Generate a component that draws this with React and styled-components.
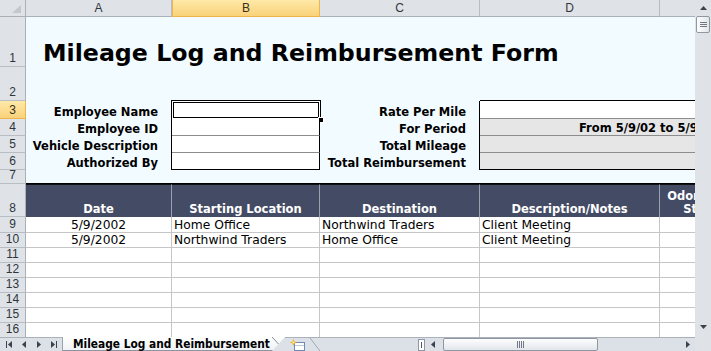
import React from 'react';
import styled, { createGlobalStyle, css } from 'styled-components';

const GlobalStyle = createGlobalStyle`
  * { box-sizing: border-box; }
  html, body { margin: 0; padding: 0; overflow: hidden; background: #fff; }
`;

const COLUMNS = ['A', 'B', 'C', 'D', 'E'];
const COL_WIDTHS = [26, 146, 148, 160, 180, 80];
const ROW_HEIGHTS = [50, 34, 18, 17, 17, 17, 14, 33, 16, 15, 15, 15, 15, 15, 15, 15];

const formRows = [
  { label: 'Employee Name', right: 'Rate Per Mile', fill: '#fff' },
  { label: 'Employee ID', right: 'For Period', fill: '#e6e6e6', value: 'From 5/9/02 to 5/9/02' },
  { label: 'Vehicle Description', right: 'Total Mileage', fill: '#e6e6e6' },
  { label: 'Authorized By', right: 'Total Reimbursement', fill: '#e6e6e6' },
];

const headings = ['Date', 'Starting Location', 'Destination', 'Description/Notes', 'Odometer Start'];

const trips = [
  { date: '5/9/2002', from: 'Home Office', to: 'Northwind Traders', notes: 'Client Meeting' },
  { date: '5/9/2002', from: 'Northwind Traders', to: 'Home Office', notes: 'Client Meeting' },
];

const Window = styled.div`
  width: 711px;
  height: 351px;
  display: flex;
  flex-direction: column;
  overflow: hidden;
  font-family: "DejaVu Sans", Verdana, sans-serif;
`;

const Main = styled.div`
  display: flex;
  height: 337px;
`;

const Viewport = styled.div`
  flex: 1;
  overflow: hidden;
`;

const Grid = styled.div`
  display: grid;
  grid-template-columns: ${COL_WIDTHS.map(w => `${w}px`).join(' ')};
  grid-template-rows: 17px ${ROW_HEIGHTS.map(h => `${h}px`).join(' ')};
  width: max-content;
`;

const headerBase = css`
  background: #dfe3e8;
  color: #30353b;
  font-family: "Liberation Sans", Arial, sans-serif;
  font-size: 12px;
  display: flex;
  justify-content: center;
`;

const activeHeader = css`
  background: linear-gradient(#fee9a8, #f9d27a);
  color: #3a3020;
`;

const Corner = styled.div`
  ${headerBase};
  position: relative;
  border-right: 1px solid #a9b0b8;
  border-bottom: 1px solid #a9b0b8;
`;

const CornerMark = styled.svg`
  position: absolute;
  right: 4px;
  bottom: 3px;
`;

const ColHead = styled.div`
  ${headerBase};
  align-items: center;
  border-right: 1px solid #b8bdc3;
  border-bottom: 1px solid #a9b0b8;
  ${p => p.$active && css`
    ${activeHeader};
    border-left: 1px solid #f0b44e;
    border-right-color: #f0b44e;
    border-bottom-color: #f0b44e;
  `}
`;

const RowHead = styled.div`
  ${headerBase};
  align-items: flex-end;
  line-height: 13px;
  padding-bottom: 1px;
  border-right: 1px solid #a9b0b8;
  border-bottom: 1px solid #b8bdc3;
  ${p => p.$active && css`
    ${activeHeader};
    border-bottom-color: #f0b44e;
    border-right-color: #f0b44e;
  `}
`;

const FormCell = styled.div`
  grid-column: span ${p => p.$span || 1};
  background: #f2fbff;
  display: flex;
  align-items: flex-end;
  border-right: ${p => (p.$edge ? '1px solid #000' : 'none')};
  border-bottom: ${p => (p.$bottom ? `1px solid ${p.$bottom}` : 'none')};
`;

const Title = styled(FormCell)`
  padding-left: 17px;
  font-size: 23.7px;
  font-weight: bold;
  color: #000;
  white-space: nowrap;
`;

const Label = styled(FormCell)`
  justify-content: flex-end;
  padding: 0 13px 0 0;
  font-size: 11.5px;
  font-weight: bold;
  line-height: 13px;
  white-space: nowrap;
  color: #000;
`;

const Box = styled(FormCell)`
  position: relative;
  background: ${p => p.$fill};
  font-size: 11.5px;
  font-weight: bold;
  line-height: 13px;
  white-space: nowrap;
  padding-left: ${p => p.$indent || 0}px;
`;

const Selection = styled.div`
  position: absolute;
  top: -1px;
  left: -1px;
  right: -2px;
  bottom: -2px;
  border: 1px solid #000;
  box-shadow: inset 0 0 0 1px #fff, inset 0 0 0 2px #000;
`;

const FillHandle = styled.span`
  position: absolute;
  right: -4px;
  bottom: -4px;
  width: 6px;
  height: 6px;
  background: #000;
  border: 1px solid #fff;
`;

const HeadCell = styled.div`
  background: #444c65;
  color: #fff;
  font-size: 11.5px;
  font-weight: bold;
  line-height: 13px;
  text-align: center;
  display: flex;
  align-items: flex-end;
  justify-content: center;
  padding-bottom: 1px;
  border-top: 1px solid #111;
  border-right: 1px solid #9aa0ae;
`;

const DataCell = styled.div`
  background: #fff;
  color: #000;
  font-size: 12.3px;
  line-height: 12px;
  white-space: nowrap;
  overflow: hidden;
  display: flex;
  align-items: flex-end;
  justify-content: ${p => (p.$center ? 'center' : 'flex-start')};
  padding: 0 2px 1px;
  border-right: 1px solid #c6c6c6;
  border-bottom: 1px solid #c6c6c6;
`;

const VScroll = styled.div`
  width: 16px;
  display: flex;
  flex-direction: column;
  align-items: center;
  background: #dfe3e8;
`;

const ScrollArrow = styled.div`
  width: 16px;
  height: ${p => p.$h || 16}px;
  display: flex;
  align-items: center;
  justify-content: center;
  flex-shrink: 0;
`;

const VThumb = styled.div`
  width: 14px;
  height: 17px;
  border: 1px solid #8f98a2;
  border-radius: 2px;
  background: linear-gradient(to right, #fdfdfe, #e2e6eb);
  display: flex;
  flex-direction: column;
  justify-content: center;
  align-items: center;
  gap: 1px;
`;

const Grip = styled.span`
  width: ${p => (p.$vertical ? 1 : 7)}px;
  height: ${p => (p.$vertical ? 7 : 1)}px;
  background: #6f7883;
`;

const Spacer = styled.div`
  flex: 1;
`;

const TabBar = styled.div`
  height: 14px;
  display: flex;
  background: #dce1e8;
`;

const BarPart = styled.div`
  height: 100%;
  flex: none;
  border-top: 1px solid #aab1ba;
  display: flex;
  align-items: center;
`;

const NavGroup = styled(BarPart)`
  width: 63px;
  padding-left: 1px;
  border-right: 1px solid #9aa2ac;
`;

const NavButton = styled.span`
  width: 15px;
  display: flex;
  justify-content: center;
`;

const SheetTab = styled.div`
  position: relative;
  flex: none;
  width: 222px;
  height: 100%;
  padding: 0 0 0 10px;
  display: flex;
  align-items: center;
  background: linear-gradient(#ffffff, #eef1f5);
  clip-path: polygon(0 0, 100% 0, calc(100% - 13px) 100%, 0 100%);
  box-shadow: inset 0 -1px #8b949f;
  font-family: "DejaVu Sans Condensed", "DejaVu Sans", sans-serif;
  font-size: 11.8px;
  font-weight: bold;
  line-height: 13px;
  white-space: nowrap;
  overflow: hidden;
  color: #000;

  &::after {
    content: '';
    position: absolute;
    top: 0;
    right: 0;
    width: 13px;
    height: 100%;
    background: linear-gradient(to bottom left, transparent calc(50% - 0.7px), #7d8792 50%, transparent calc(50% + 0.7px));
  }
`;

const NewTab = styled(BarPart)`
  position: relative;
  width: 35px;
  padding-left: 5px;

  &::after {
    content: '';
    position: absolute;
    top: 0;
    right: 0;
    width: 10px;
    height: 100%;
    background: linear-gradient(to bottom left, transparent calc(50% - 0.7px), #9aa2ac 50%, transparent calc(50% + 0.7px));
  }
`;

const Filler = styled(BarPart)`
  width: 97px;
`;

const Splitter = styled(BarPart)`
  width: 9px;
  justify-content: center;

  span {
    width: 7px;
    height: 12px;
    border: 1px solid #8f98a2;
    background: #fff;
    display: flex;
    justify-content: center;
  }
  span::after {
    content: '';
    width: 1px;
    margin-top: 2px;
    height: 6px;
    background: #555;
  }
`;

const HArrow = styled(BarPart)`
  width: 14px;
  justify-content: center;
`;

const Track = styled(BarPart)`
  flex: 1;
`;

const HThumb = styled.div`
  width: 155px;
  height: 13px;
  margin-left: 3px;
  border: 1px solid #8f98a2;
  border-radius: 2px;
  background: linear-gradient(#fdfdfe, #e2e6eb);
  display: flex;
  justify-content: center;
  align-items: center;
  gap: 1px;
`;

const CornerBox = styled.div`
  width: 16px;
  flex: none;
  height: 100%;
  background: #dfe3e8;
`;

const Tri = ({ dir, bar }) => {
  const shapes = {
    up: '0,4 3.5,0 7,4',
    down: '0,0 7,0 3.5,4',
    left: '4,0 4,7 0,3.5',
    right: '0,0 0,7 4,3.5',
  };
  const horizontal = dir === 'left' || dir === 'right';
  const w = horizontal ? 4 + (bar ? 2 : 0) : 7;
  const h = horizontal ? 7 : 4;
  return (
    <svg width={w} height={h} viewBox={`${bar && dir === 'left' ? -2 : 0} 0 ${w} ${h}`}>
      <polygon points={shapes[dir]} fill="#3a434e" />
      {bar && <rect x={dir === 'left' ? -2 : 5} y="0" width="1" height="7" fill="#3a434e" />}
    </svg>
  );
};

const NewSheetIcon = () => (
  <svg width="16" height="12" viewBox="0 0 16 12">
    <rect x="4.5" y="3.5" width="10" height="8" fill="#fff" stroke="#6d8bb0" />
    <line x1="5" y1="6.5" x2="14" y2="6.5" stroke="#b9c8da" />
    <path d="M3.5 0 L4.4 2.6 L7 3.5 L4.4 4.4 L3.5 7 L2.6 4.4 L0 3.5 L2.6 2.6 Z" fill="#f3a90f" />
    <circle cx="3.5" cy="3.5" r="1.1" fill="#fff3b0" />
  </svg>
);

const App = () => (
  <Window>
    <GlobalStyle />
    <Main>
      <Viewport>
        <Grid>
          <Corner>
            <CornerMark width="9" height="8" viewBox="0 0 9 8">
              <polygon points="9,0 9,8 0,8" fill="#c3c8ce" />
            </CornerMark>
          </Corner>
          {COLUMNS.map(c => (
            <ColHead key={c} $active={c === 'B'}>{c}</ColHead>
          ))}

          <RowHead>1</RowHead>
          <Title $span={5}>Mileage Log and Reimbursement Form</Title>

          <RowHead>2</RowHead>
          <FormCell />
          <FormCell $bottom="#000" />
          <FormCell />
          <FormCell $span={2} $bottom="#000" />

          {formRows.map((row, i) => {
            const bottom = i === formRows.length - 1 ? '#000' : '#8c8c8c';
            return (
              <React.Fragment key={row.label}>
                <RowHead $active={i === 0}>{i + 3}</RowHead>
                <Label $edge>{row.label}</Label>
                <Box $fill="#fff" $edge $bottom={bottom}>
                  {i === 0 && (
                    <Selection>
                      <FillHandle />
                    </Selection>
                  )}
                </Box>
                <Label $edge>{row.right}</Label>
                <Box $span={2} $fill={row.fill} $edge $bottom={bottom} $indent={row.value ? 99 : 0}>
                  {row.value}
                </Box>
              </React.Fragment>
            );
          })}

          <RowHead>7</RowHead>
          <FormCell $span={5} $bottom="#000" />

          <RowHead>8</RowHead>
          {headings.map(h => (
            <HeadCell key={h}>{h}</HeadCell>
          ))}

          {Array.from({ length: 8 }, (_, i) => {
            const trip = trips[i] || {};
            return (
              <React.Fragment key={i}>
                <RowHead>{i + 9}</RowHead>
                <DataCell $center>{trip.date}</DataCell>
                <DataCell>{trip.from}</DataCell>
                <DataCell>{trip.to}</DataCell>
                <DataCell>{trip.notes}</DataCell>
                <DataCell />
              </React.Fragment>
            );
          })}
        </Grid>
      </Viewport>
      <VScroll>
        <ScrollArrow>
          <Tri dir="up" />
        </ScrollArrow>
        <VThumb>
          <Grip />
          <Grip />
          <Grip />
        </VThumb>
        <Spacer />
        <ScrollArrow $h={20}>
          <Tri dir="down" />
        </ScrollArrow>
      </VScroll>
    </Main>
    <TabBar>
      <NavGroup>
        <NavButton><Tri dir="left" bar /></NavButton>
        <NavButton><Tri dir="left" /></NavButton>
        <NavButton><Tri dir="right" /></NavButton>
        <NavButton><Tri dir="right" bar /></NavButton>
      </NavGroup>
      <SheetTab>Mileage Log and Reimbursement</SheetTab>
      <NewTab>
        <NewSheetIcon />
      </NewTab>
      <Filler />
      <Splitter>
        <span />
      </Splitter>
      <HArrow>
        <Tri dir="left" />
      </HArrow>
      <Track>
        <HThumb>
          <Grip $vertical />
          <Grip $vertical />
          <Grip $vertical />
          <Grip $vertical />
        </HThumb>
      </Track>
      <HArrow>
        <Tri dir="right" />
      </HArrow>
      <CornerBox />
    </TabBar>
  </Window>
);

export default App;
